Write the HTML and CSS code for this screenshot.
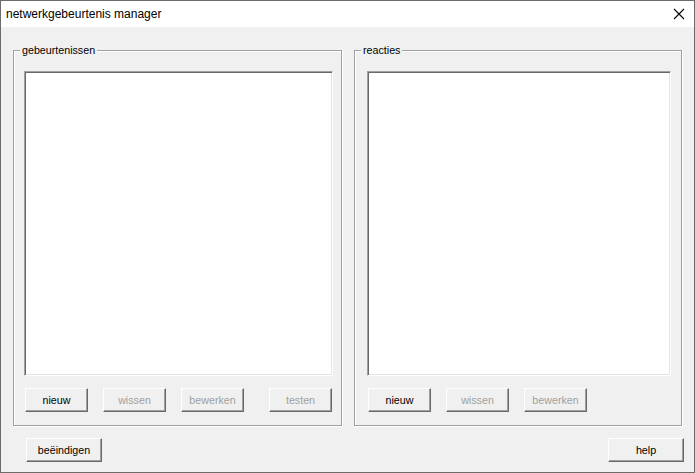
FILE: index.html
```html
<!DOCTYPE html>
<html lang="nl">
<head>
    <meta charset="UTF-8">
    <title>netwerkgebeurtenis manager</title>
    <link rel="stylesheet" href="styles.css">
</head>
<body>
    <div class="window">
        <div class="titlebar">
            <span class="title">netwerkgebeurtenis manager</span>
            <svg class="close" width="12" height="12" viewBox="0 0 12 12">
                <path d="M1 1 L11 11 M11 1 L1 11" stroke="#000" stroke-width="1.1" fill="none"/>
            </svg>
        </div>

        <div class="content">
            <div class="groups">
                <div class="group group-events">
                    <span class="legend">gebeurtenissen</span>
                    <div class="listbox"></div>
                    <div class="buttons">
                        <button class="btn">nieuw</button>
                        <button class="btn" disabled>wissen</button>
                        <button class="btn" disabled>bewerken</button>
                        <button class="btn btn-push" disabled>testen</button>
                    </div>
                </div>

                <div class="group group-reactions">
                    <span class="legend">reacties</span>
                    <div class="listbox"></div>
                    <div class="buttons">
                        <button class="btn">nieuw</button>
                        <button class="btn" disabled>wissen</button>
                        <button class="btn" disabled>bewerken</button>
                    </div>
                </div>
            </div>

            <div class="footer">
                <button class="btn btn-wide">beëindigen</button>
                <button class="btn btn-wide">help</button>
            </div>
        </div>
    </div>
</body>
</html>
```

FILE: styles.css
```css
* {
    box-sizing: border-box;
    margin: 0;
    padding: 0;
}

body {
    width: 695px;
    height: 473px;
    overflow: hidden;
    font-family: 'Liberation Sans', Arial, sans-serif;
    font-size: 10.7px;
    color: #000;
}

.window {
    width: 695px;
    height: 473px;
    border: 1px solid #6b6b6b;
    background: #f0f0f0;
    display: flex;
    flex-direction: column;
}

.titlebar {
    height: 26px;
    background: #fff;
    display: flex;
    align-items: center;
    justify-content: space-between;
    padding: 0 9px 0 5px;
    flex-shrink: 0;
}

.title {
    font-family: 'Liberation Sans', Arial, sans-serif;
    font-size: 12px;
    padding-bottom: 1px;
}

.close {
    display: block;
}

.content {
    flex: 1;
    padding: 23px 0 0 12px;
}

.groups {
    display: flex;
    gap: 12px;
}

.group {
    position: relative;
    height: 376px;
    border: 1px solid #a0a0a0;
    box-shadow: inset 1px 1px 0 #fff, 1px 1px 0 #fff;
    padding: 20px 0 0 10px;
}

.group-events {
    width: 329px;
}

.group-reactions {
    width: 328px;
    padding-left: 12px;
}

.legend {
    position: absolute;
    top: -8px;
    left: 6px;
    padding: 0 2px 0 2px;
    background: #f0f0f0;
    line-height: 14px;
}

.listbox {
    height: 305px;
    background: #fff;
    border-top: 1px solid #a0a0a0;
    border-left: 1px solid #a0a0a0;
    border-right: 1px solid #fff;
    border-bottom: 1px solid #fff;
    box-shadow: inset 1px 1px 0 #696969, inset -1px -1px 0 #e3e3e3;
}

.group-events .listbox {
    width: 309px;
}

.group-reactions .listbox {
    width: 304px;
}

.buttons {
    display: flex;
    gap: 15px;
    margin-top: 12px;
    padding-left: 1px;
}

.btn {
    width: 63px;
    height: 24px;
    font-family: 'Liberation Sans', Arial, sans-serif;
    font-size: 10.7px;
    color: #000;
    background: #f0f0f0;
    border-top: 1px solid #fff;
    border-left: 1px solid #fff;
    border-right: 1px solid #696969;
    border-bottom: 1px solid #696969;
    box-shadow: inset -1px -1px 0 #a0a0a0;
    padding-bottom: 1px;
}

.btn:disabled {
    color: #a0a0a0;
}

.btn-push {
    margin-left: 10px;
}

.footer {
    display: flex;
    justify-content: space-between;
    padding: 12px 10px 0 13px;
}

.btn-wide {
    width: 76px;
}
```
